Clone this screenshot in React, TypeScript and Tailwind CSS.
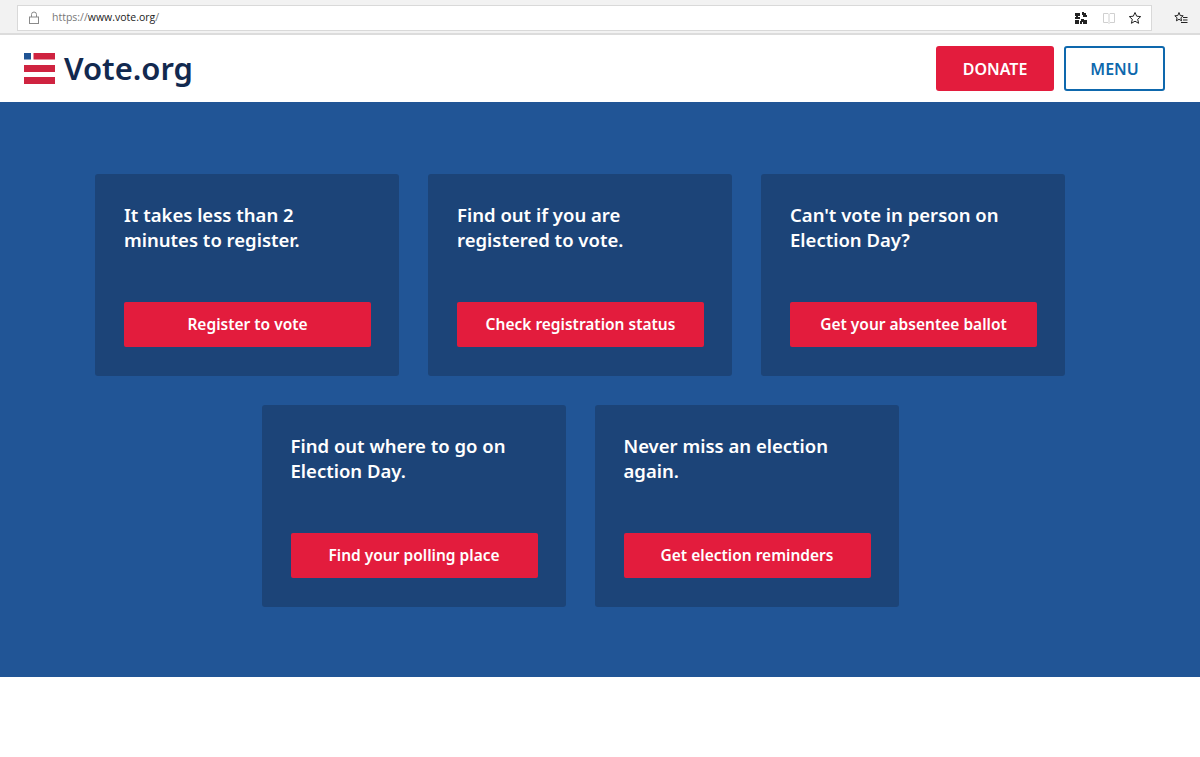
const cards = [
  { text: "It takes less than 2 minutes to register.", cta: "Register to vote" },
  { text: "Find out if you are registered to vote.", cta: "Check registration status" },
  { text: "Can't vote in person on Election Day?", cta: "Get your absentee ballot" },
  { text: "Find out where to go on Election Day.", cta: "Find your polling place" },
  { text: "Never miss an election again.", cta: "Get election reminders" },
];

function BrowserBar() {
  return (
    <div className="h-[35px] bg-[#f2f2f2] border-b-2 border-[#dcdcdc] flex items-start pl-[17px] pt-[5px]">
      <div className="w-[1135px] h-[26px] bg-white border border-[#d9d9d9] flex items-center">
        <svg width="12" height="14" viewBox="0 0 12 14" fill="none" stroke="#8a8a8a" strokeWidth="1" className="ml-[10px]">
          <rect x="1.5" y="6" width="9" height="6.5" />
          <path d="M3.5 6V3.5a2.5 2.5 0 0 1 5 0V6" />
        </svg>
        <span className="ml-[12px] text-[10.5px] text-[#777] font-['Open_Sans',sans-serif]">
          https://<span className="text-[#222]">www.vote.org</span>/
        </span>
        <div className="ml-auto flex items-center">
          <svg width="14" height="14" viewBox="0 0 14 14" fill="#222">
            <path d="M1 2h5v3H4v1h2v2H1V6h1V5H1zM8 1h2v1h2v2h1v2H9V4H8zM7 8h3v1h3v4H9v-2H8v2H6v-3h1zM1 9h4v4H1z" />
          </svg>
          <svg width="14" height="14" viewBox="0 0 14 14" fill="none" stroke="#d0d0d0" className="ml-[14px]">
            <path d="M1.5 2.5h4.5l1 1 1-1h4.5v9H8l-1 1-1-1H1.5zM7 3.5v8" />
          </svg>
          <svg width="14" height="14" viewBox="0 0 14 14" fill="none" stroke="#222" className="ml-[12px] mr-[9px]">
            <path d="M7 1.5l1.7 3.7 4 .4-3 2.7.9 4L7 10.2l-3.6 2.1.9-4-3-2.7 4-.4z" />
          </svg>
        </div>
      </div>
      <svg width="14" height="14" viewBox="0 0 14 14" fill="none" stroke="#222" className="ml-[22px] mt-[6px]">
        <path d="M5 1.5l1.2 3 3 .3-2.3 2 .7 3L5 8.300l-2.600 1.500.7-3-2.300-2 3-.3zM9 6.500h4.500M9 9h4.500M7 11.500h6.500" />
      </svg>
    </div>
  );
}

function Logo() {
  return (
    <div className="flex items-center">
      <svg width="31" height="31" viewBox="0 0 31 31">
        <rect x="0" y="0" width="7" height="6.500" fill="#1f5494" />
        <rect x="9.500" y="0" width="21.500" height="6.500" fill="#cf2340" />
        <rect x="0" y="12" width="31" height="7" fill="#cf2340" />
        <rect x="0" y="24" width="31" height="7" fill="#cf2340" />
      </svg>
      <span className="ml-[9px] text-[31px] leading-none font-semibold text-[#12294f] font-['Noto_Sans',sans-serif]">
        Vote.org
      </span>
    </div>
  );
}

function Header() {
  return (
    <header className="h-[67px] bg-white flex items-center pl-6 pr-[35px]">
      <Logo />
      <div className="ml-auto flex items-center gap-[10px]">
        <button className="w-[118px] h-[45px] bg-[#e31c3d] rounded-[3px] text-white text-base font-semibold font-['Noto_Sans',sans-serif]">
          DONATE
        </button>
        <button className="w-[101px] h-[45px] bg-white border-2 border-[#0e68ad] rounded-[3px] text-[#0e68ad] text-base font-semibold font-['Noto_Sans',sans-serif]">
          MENU
        </button>
      </div>
    </header>
  );
}

function Card({ text, cta }: { text: string; cta: string }) {
  return (
    <div className="w-[304px] h-[202px] bg-[#1c4478] rounded-[3px] px-[29px] pt-[29px] flex flex-col">
      <p className="h-[99px] text-[18.5px] leading-[24.500px] font-semibold text-white">{text}</p>
      <button className="w-[247px] h-[45px] bg-[#e31c3d] rounded-[2px] text-white text-[15.500px] font-semibold">
        {cta}
      </button>
    </div>
  );
}

export default function App() {
  return (
    <div className="min-h-[757px] bg-white font-['Noto_Sans',sans-serif]">
      <BrowserBar />
      <Header />
      <main className="h-[575px] bg-[#215596] pr-[40px] pt-[72px] flex justify-center">
        <div className="w-[970px] flex flex-wrap justify-center content-start gap-[29px]">
          {cards.map((c) => (
            <Card key={c.cta} text={c.text} cta={c.cta} />
          ))}
        </div>
      </main>
    </div>
  );
}
